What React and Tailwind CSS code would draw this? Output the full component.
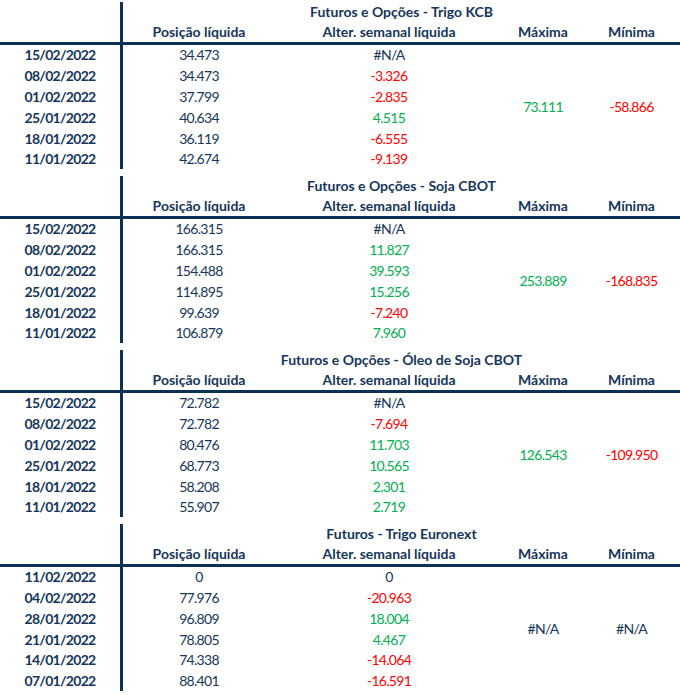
import React from 'react'

const tables = [
  {
    title: 'Futuros e Opções - Trigo KCB',
    max: '73.111', min: '-58.866', maxColor: 'g', minColor: 'r',
    rows: [
      ['15/02/2022', '34.473', '#N/A'],
      ['08/02/2022', '34.473', '-3.326'],
      ['01/02/2022', '37.799', '-2.835'],
      ['25/01/2022', '40.634', '4.515'],
      ['18/01/2022', '36.119', '-6.555'],
      ['11/01/2022', '42.674', '-9.139'],
    ],
  },
  {
    title: 'Futuros e Opções - Soja CBOT',
    max: '253.889', min: '-168.835', maxColor: 'g', minColor: 'r',
    rows: [
      ['15/02/2022', '166.315', '#N/A'],
      ['08/02/2022', '166.315', '11.827'],
      ['01/02/2022', '154.488', '39.593'],
      ['25/01/2022', '114.895', '15.256'],
      ['18/01/2022', '99.639', '-7.240'],
      ['11/01/2022', '106.879', '7.960'],
    ],
  },
  {
    title: 'Futuros e Opções - Óleo de Soja CBOT',
    max: '126.543', min: '-109.950', maxColor: 'g', minColor: 'r',
    rows: [
      ['15/02/2022', '72.782', '#N/A'],
      ['08/02/2022', '72.782', '-7.694'],
      ['01/02/2022', '80.476', '11.703'],
      ['25/01/2022', '68.773', '10.565'],
      ['18/01/2022', '58.208', '2.301'],
      ['11/01/2022', '55.907', '2.719'],
    ],
  },
  {
    title: 'Futuros - Trigo Euronext',
    max: '#N/A', min: '#N/A', maxColor: 'n', minColor: 'n',
    rows: [
      ['11/02/2022', '0', '0'],
      ['04/02/2022', '77.976', '-20.963'],
      ['28/01/2022', '96.809', '18.004'],
      ['21/01/2022', '78.805', '4.467'],
      ['14/01/2022', '74.338', '-14.064'],
      ['07/01/2022', '88.401', '-16.591'],
    ],
  },
]

const colorOf = v => {
  if (v === '#N/A' || v === '0') return 'text-[#15365c]'
  return v.startsWith('-') ? 'text-[#ff0000]' : 'text-[#00b050]'
}
const fixed = c => (c === 'g' ? 'text-[#00b050]' : c === 'r' ? 'text-[#ff0000]' : 'text-[#15365c]')

function Table({ t }) {
  return (
    <div className="flex flex-col mb-[4.2px]">
      {/* cabecera */}
      <div className="flex pt-[2px]">
        <div className="w-[120px]" />
        <div className="w-[3px] bg-[#0b3155]" />
        <div className="flex-1 flex flex-col font-bold">
          <div className="h-[20px] flex items-center justify-center">{t.title}</div>
          <div className="h-[20px] flex items-center">
            <div className="w-[152px] text-center">Posição líquida</div>
            <div className="w-[228px] text-center">Alter. semanal líquida</div>
            <div className="w-[80px] text-center">Máxima</div>
            <div className="w-[97px] text-center">Mínima</div>
          </div>
        </div>
      </div>
      <div className="h-[3px] bg-[#0b3155]" />
      {/* datos */}
      <div className="flex tracking-[-0.7px]">
        <div className="w-[120px] flex flex-col font-bold">
          {t.rows.map(r => (
            <div key={r[0]} className="h-[20.8px] flex items-center justify-center">{r[0]}</div>
          ))}
        </div>
        <div className="w-[3px] bg-[#0b3155] mb-[1px]" />
        <div className="w-[152px] flex flex-col">
          {t.rows.map(r => (
            <div key={r[0]} className="h-[20.8px] flex items-center justify-center">{r[1]}</div>
          ))}
        </div>
        <div className="w-[228px] flex flex-col">
          {t.rows.map(r => (
            <div key={r[0]} className={'h-[20.8px] flex items-center justify-center ' + colorOf(r[2])}>{r[2]}</div>
          ))}
        </div>
        <div className={'w-[80px] flex items-center justify-center ' + fixed(t.maxColor)}>{t.max}</div>
        <div className={'w-[97px] flex items-center justify-center ' + fixed(t.minColor)}>{t.min}</div>
      </div>
    </div>
  )
}

export default function App() {
  return (
    <div className="w-[680px] h-[695px] bg-white overflow-hidden text-[14px] leading-none text-[#15365c] font-['Lato',sans-serif]">
      {tables.map(t => (
        <Table key={t.title} t={t} />
      ))}
    </div>
  )
}
